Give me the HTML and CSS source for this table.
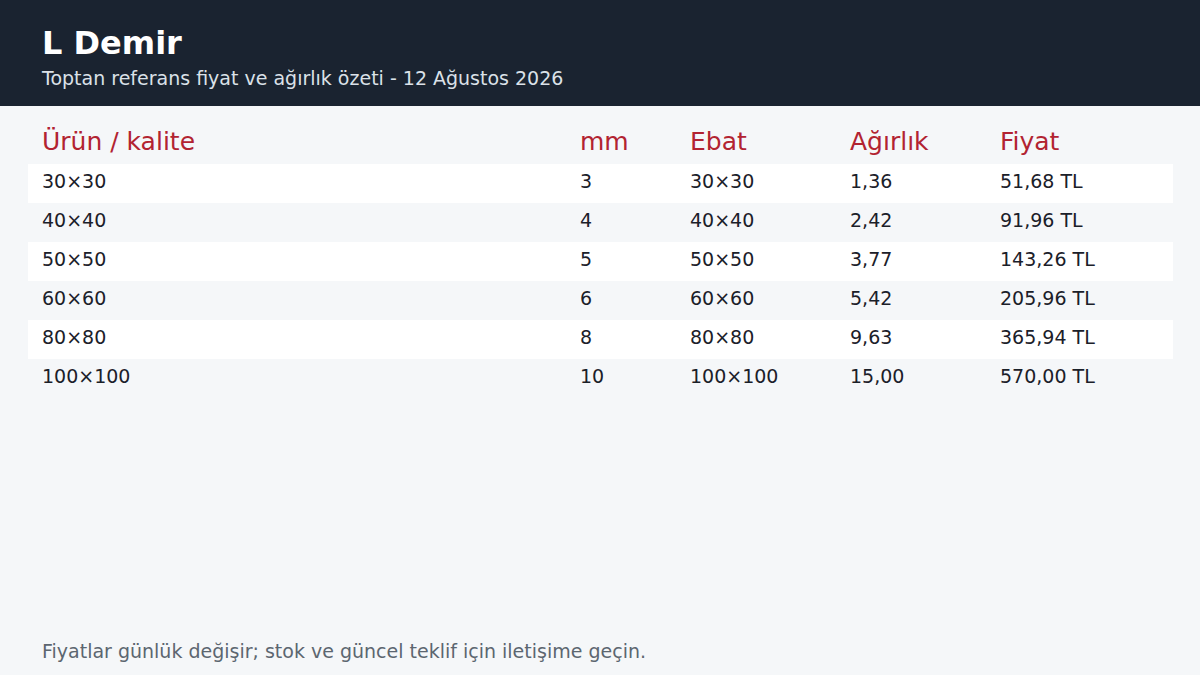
FILE: index.html
```html
<!DOCTYPE html>
<html lang="tr">
<head>
<meta charset="utf-8">
<title>L Demir</title>
<link rel="stylesheet" href="styles.css">
</head>
<body>
<header class="top">
  <h1 class="title">L Demir</h1>
  <p class="subtitle">Toptan referans fiyat ve ağırlık özeti - 12 Ağustos 2026</p>
</header>
<main class="content">
  <table class="prices">
    <colgroup>
      <col class="c-name"><col class="c-mm"><col class="c-size"><col class="c-weight"><col class="c-price">
    </colgroup>
    <thead>
      <tr><th>Ürün / kalite</th><th>mm</th><th>Ebat</th><th>Ağırlık</th><th>Fiyat</th></tr>
    </thead>
    <tbody>
      <tr><td>30×30</td><td>3</td><td>30×30</td><td>1,36</td><td>51,68 TL</td></tr>
      <tr><td>40×40</td><td>4</td><td>40×40</td><td>2,42</td><td>91,96 TL</td></tr>
      <tr><td>50×50</td><td>5</td><td>50×50</td><td>3,77</td><td>143,26 TL</td></tr>
      <tr><td>60×60</td><td>6</td><td>60×60</td><td>5,42</td><td>205,96 TL</td></tr>
      <tr><td>80×80</td><td>8</td><td>80×80</td><td>9,63</td><td>365,94 TL</td></tr>
      <tr><td>100×100</td><td>10</td><td>100×100</td><td>15,00</td><td>570,00 TL</td></tr>
    </tbody>
  </table>
</main>
<footer class="note">Fiyatlar günlük değişir; stok ve güncel teklif için iletişime geçin.</footer>
</body>
</html>
```
FILE: styles.css
```css
html, body {
  margin: 0;
  padding: 0;
}
body {
  width: 1200px;
  height: 675px;
  overflow: hidden;
  display: flex;
  flex-direction: column;
  background: #f5f7f9;
  font-family: "DejaVu Sans", "Noto Sans", sans-serif;
  color: #1b2029;
}
.top {
  background: #1a2330;
  padding: 24px 42px 16px;
  height: 106px;
  box-sizing: border-box;
}
.title {
  margin: 0;
  font-size: 32px;
  line-height: 38px;
  font-weight: bold;
  color: #ffffff;
}
.subtitle {
  margin: 4px 0 0;
  font-size: 19px;
  line-height: 24px;
  color: #dbe1e8;
}
.content {
  flex: 1;
  padding: 12px 27px 0 28px;
}
.prices {
  width: 100%;
  border-collapse: collapse;
  table-layout: fixed;
}
.c-name { width: 538px; }
.c-mm { width: 110px; }
.c-size { width: 160px; }
.c-weight { width: 150px; }
.prices th {
  text-align: left;
  font-weight: normal;
  font-size: 25px;
  line-height: 30px;
  color: #b22331;
  padding: 9px 14px 7px;
}
.prices td {
  font-size: 19px;
  line-height: 23px;
  padding: 6px 14px 10px;
  color: #1b2029;
}
.prices tbody tr:nth-child(odd) {
  background: #ffffff;
}
.note {
  padding: 0 42px 12px;
  font-size: 19px;
  line-height: 24px;
  color: #5c6670;
}
```
